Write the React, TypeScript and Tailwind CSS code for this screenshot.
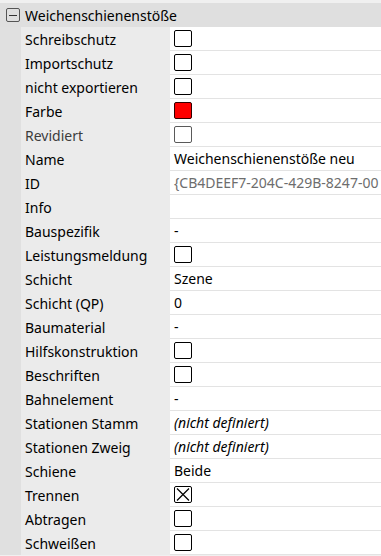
type Row = {
  label: string
  kind: 'check' | 'text' | 'italic' | 'color' | 'id'
  value?: string
  checked?: boolean
  disabled?: boolean
}

const rows: Row[] = [
  { label: 'Schreibschutz', kind: 'check' },
  { label: 'Importschutz', kind: 'check' },
  { label: 'nicht exportieren', kind: 'check' },
  { label: 'Farbe', kind: 'color' },
  { label: 'Revidiert', kind: 'check', disabled: true },
  { label: 'Name', kind: 'text', value: 'Weichenschienenstöße neu' },
  { label: 'ID', kind: 'id', value: '{CB4DEEF7-204C-429B-8247-00' },
  { label: 'Info', kind: 'text', value: '' },
  { label: 'Bauspezifik', kind: 'text', value: '-' },
  { label: 'Leistungsmeldung', kind: 'check' },
  { label: 'Schicht', kind: 'text', value: 'Szene' },
  { label: 'Schicht (QP)', kind: 'text', value: '0' },
  { label: 'Baumaterial', kind: 'text', value: '-' },
  { label: 'Hilfskonstruktion', kind: 'check' },
  { label: 'Beschriften', kind: 'check' },
  { label: 'Bahnelement', kind: 'text', value: '-' },
  { label: 'Stationen Stamm', kind: 'italic', value: '(nicht definiert)' },
  { label: 'Stationen Zweig', kind: 'italic', value: '(nicht definiert)' },
  { label: 'Schiene', kind: 'text', value: 'Beide' },
  { label: 'Trennen', kind: 'check', checked: true },
  { label: 'Abtragen', kind: 'check' },
  { label: 'Schweißen', kind: 'check' },
]

function Checkbox({ checked, disabled }: { checked?: boolean; disabled?: boolean }) {
  return (
    <span
      className={`flex h-[17px] w-[18px] items-center justify-center rounded-[2px] border bg-white ${
        disabled ? 'border-[#5a5a5a]' : 'border-black'
      }`}
    >
      {checked && (
        <svg width="14" height="13" viewBox="0 0 14 13">
          <path d="M1 0.5 L13 12.5 M13 0.5 L1 12.5" stroke="black" strokeWidth="1.2" />
        </svg>
      )}
    </span>
  )
}

function Value({ row }: { row: Row }) {
  switch (row.kind) {
    case 'check':
      return <Checkbox checked={row.checked} disabled={row.disabled} />
    case 'color':
      return <span className="h-[17px] w-[18px] rounded-[2px] border border-[#300] bg-[#ff0000]" />
    case 'italic':
      return <span className="italic">{row.value}</span>
    case 'id':
      return <span className="text-[#6d6d6d]">{row.value}</span>
    default:
      return <span>{row.value}</span>
  }
}

export default function App() {
  return (
    <div
      className="h-[556px] w-[381px] overflow-hidden bg-[#f0f0f0] pt-[3px] text-[14px] text-black"
      style={{ fontFamily: '"Noto Sans", "Open Sans", sans-serif' }}
    >
      <div className="flex h-6 items-center bg-[#dfdfdf]">
        <span className="ml-[6px] flex h-[14px] w-[14px] items-center justify-center rounded-[2px] border border-[#555]">
          <span className="h-px w-[8px] bg-[#333]" />
        </span>
        <span className="ml-[5px] whitespace-nowrap">Weichenschienenstöße</span>
      </div>
      <div className="flex bg-[#e0e0e0]">
        <div className="w-[21px] shrink-0" />
        <div className="flex-1">
          {rows.map((row) => (
            <div key={row.label} className="flex h-6">
              <div
                className={`flex w-[149px] shrink-0 items-center bg-[#ebebeb] pl-1 whitespace-nowrap ${
                  row.disabled ? 'text-[#3c3c3c]' : ''
                }`}
              >
                {row.label}
              </div>
              <div className="flex min-w-0 flex-1 items-center overflow-hidden border-b border-[#e3e3e3] bg-white pl-1 whitespace-nowrap">
                <Value row={row} />
              </div>
            </div>
          ))}
        </div>
      </div>
    </div>
  )
}
